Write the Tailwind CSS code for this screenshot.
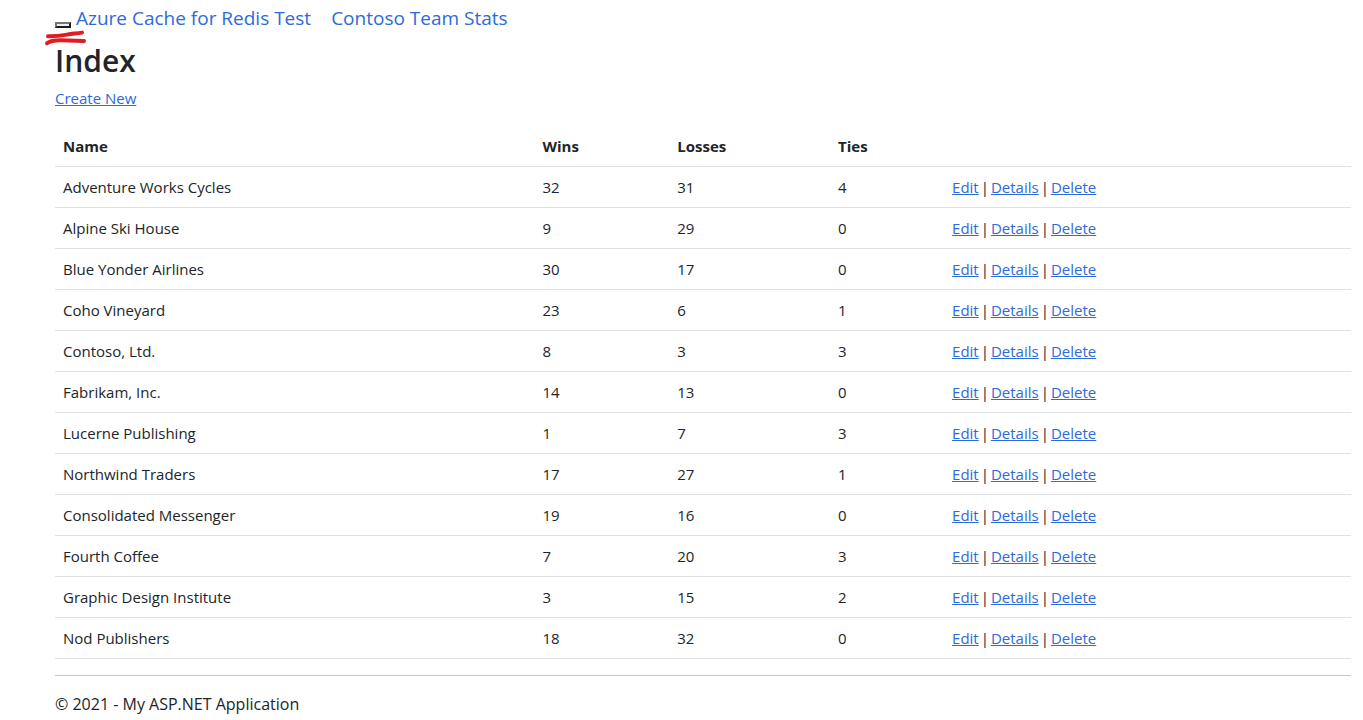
<!DOCTYPE html>
<html lang="en">
<head>
<meta charset="utf-8">
<meta name="viewport" content="width=device-width, initial-scale=1">
<title>Index - Azure Cache for Redis Test</title>
<script src="https://cdn.jsdelivr.net/npm/@tailwindcss/browser@4"></script>
</head>
<body class="bg-white pl-[55px] pr-3 font-['Open_Sans','Noto_Sans',sans-serif] text-[15px] leading-6 text-[#212529]">
<header class="relative flex h-10 items-center gap-5 text-[19px] text-[#2f6ad9]">
  <div class="flex items-center gap-[5px]">
    <button type="button" aria-label="Toggle navigation" class="mt-[10px] h-[6px] w-4 border-2 border-t-[#767676] border-l-[#767676] border-r-[#1c1c1c] border-b-[#1c1c1c] bg-[#efefef]"></button>
    <a href="#" class="-mt-1">Azure Cache for Redis Test</a>
  </div>
  <a href="#" class="-mt-1">Contoso Team Stats</a>
  <svg class="absolute top-[29px] -left-[11px]" width="44" height="18" viewBox="0 0 44 18" fill="none" stroke="#e01b22" stroke-width="4" stroke-linecap="round" stroke-linejoin="round" aria-hidden="true">
    <path d="M4 7.2C11 7.4 17 6.6 23 5.6C29 4.7 33 4.4 38 3.6"/>
    <path d="M3 14.2C6 11.8 11 11.1 17 11.2L40 12"/>
  </svg>
</header>
<main>
  <h2 class="mt-[2px] mb-[6px] text-[30px] leading-[38px] font-semibold">Index</h2>
  <p class="mb-4"><a href="#" class="text-[#2f6ad9] underline">Create New</a></p>
  <table class="w-full table-fixed border-collapse text-left [&_th]:p-2 [&_th]:font-bold [&_td]:p-2 [&_tr]:border-b [&_tr]:border-[#dee2e6] [&_a]:text-[#2f6ad9] [&_a]:underline">
    <colgroup><col class="w-[37%]"><col class="w-[10.4%]"><col class="w-[12.4%]"><col class="w-[8.8%]"><col></colgroup>
    <thead><tr><th>Name</th><th>Wins</th><th>Losses</th><th>Ties</th><th></th></tr></thead>
    <tbody id="teams"></tbody>
  </table>
</main>
<hr class="mt-4 mb-4 border-[#c4c5c7]">
<footer class="text-base leading-6"><p>© 2021 - My ASP.NET Application</p></footer>
<script>
const teams = [
  ["Adventure Works Cycles", 32, 31, 4],
  ["Alpine Ski House", 9, 29, 0],
  ["Blue Yonder Airlines", 30, 17, 0],
  ["Coho Vineyard", 23, 6, 1],
  ["Contoso, Ltd.", 8, 3, 3],
  ["Fabrikam, Inc.", 14, 13, 0],
  ["Lucerne Publishing", 1, 7, 3],
  ["Northwind Traders", 17, 27, 1],
  ["Consolidated Messenger", 19, 16, 0],
  ["Fourth Coffee", 7, 20, 3],
  ["Graphic Design Institute", 3, 15, 2],
  ["Nod Publishers", 18, 32, 0]
];
document.getElementById("teams").innerHTML = teams.map(t =>
  `<tr>${t.map(v => `<td>${v}</td>`).join("")}<td><div class="flex gap-[2px]"><a href="#">Edit</a><span>|</span><a href="#">Details</a><span>|</span><a href="#">Delete</a></div></td></tr>`
).join("");
</script>
</body>
</html>
